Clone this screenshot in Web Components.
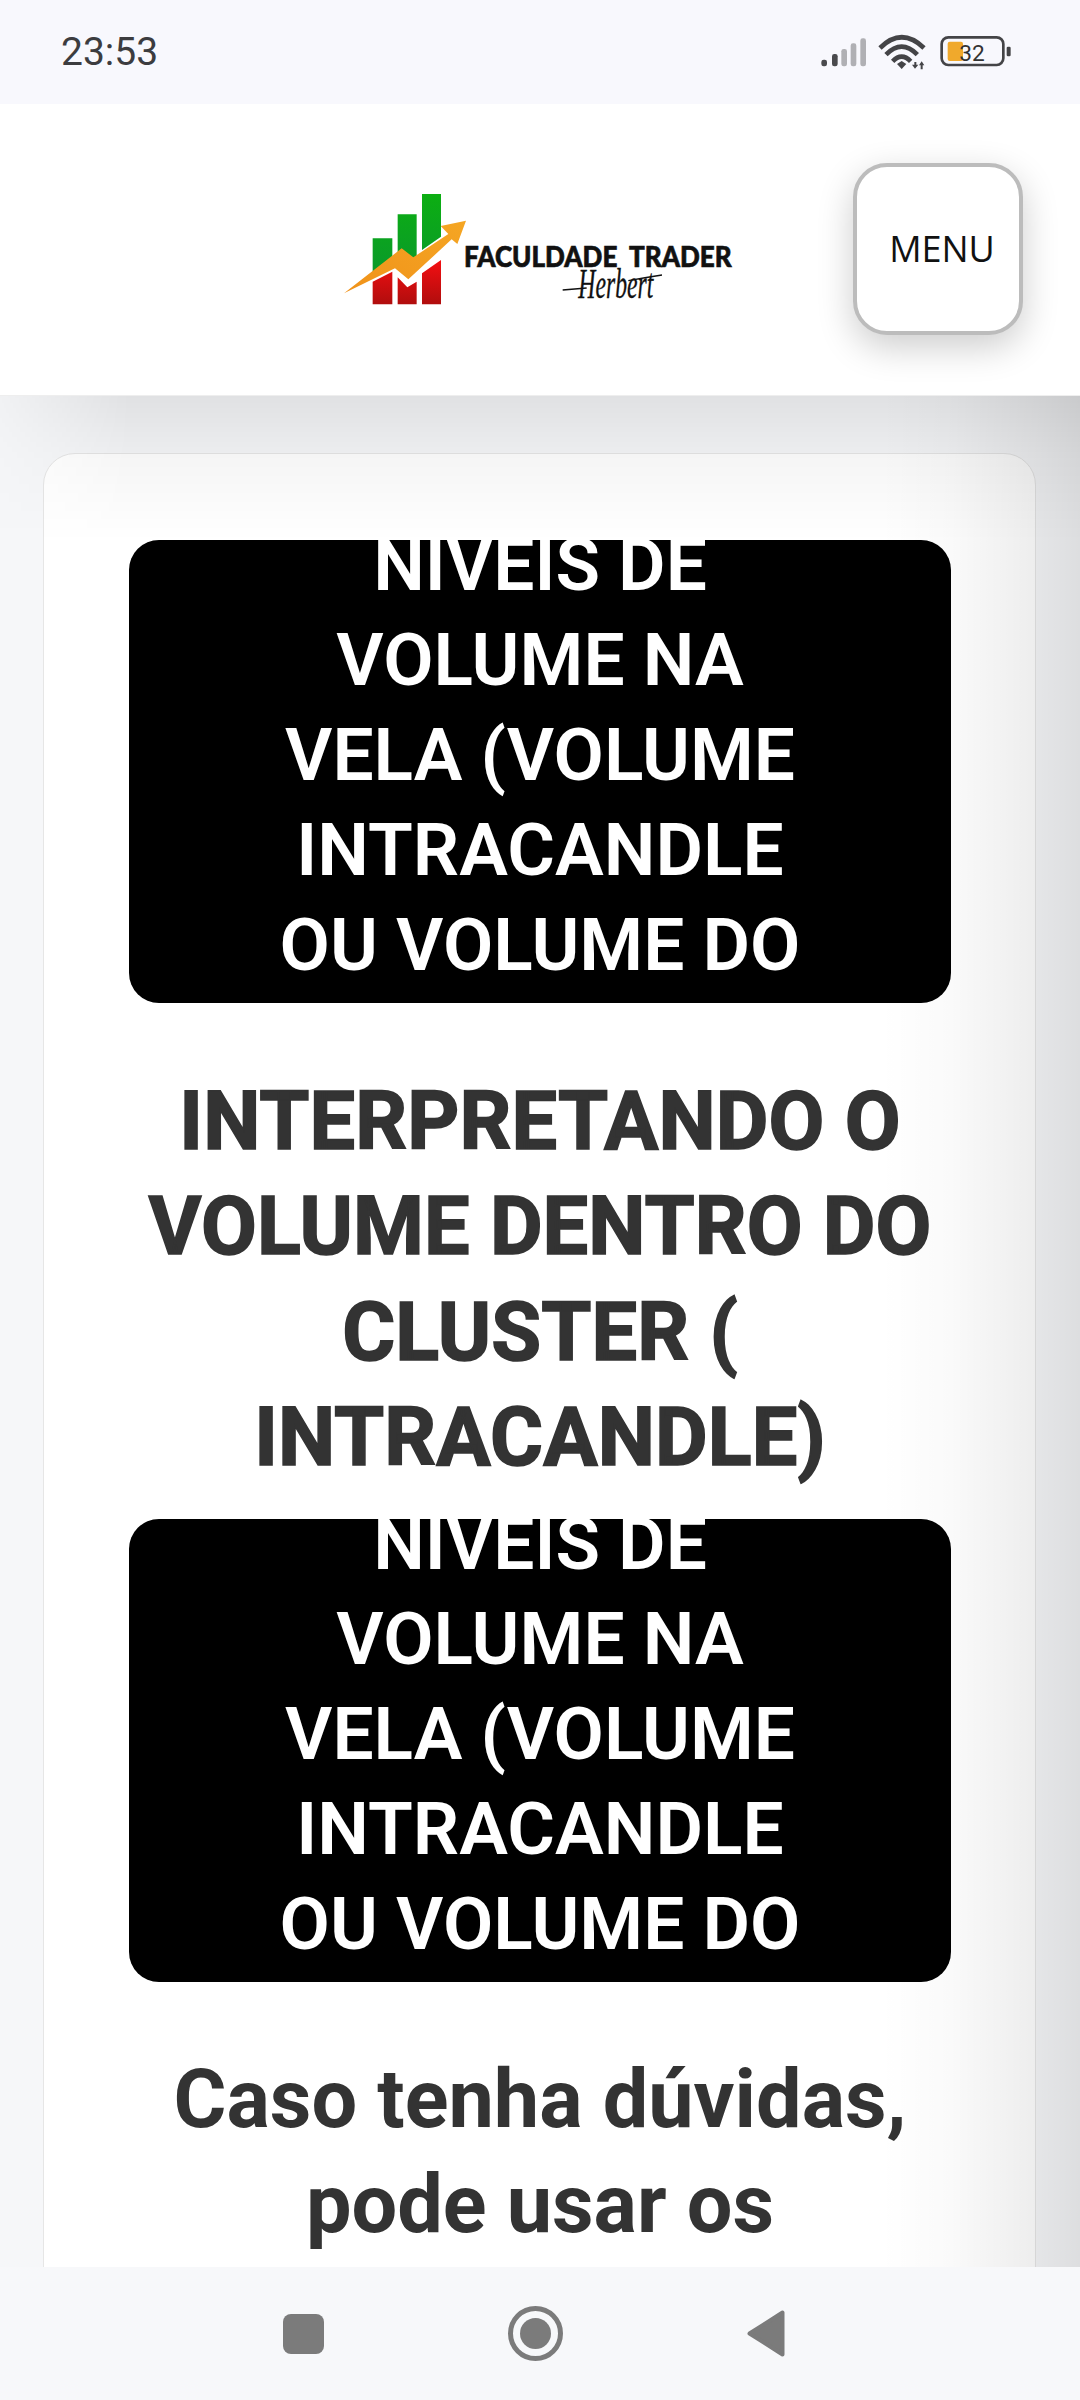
<!DOCTYPE html>
<html lang="pt-BR"><head><meta charset="utf-8"><title>Faculdade Trader</title>
<style>
html,body{margin:0;padding:0;height:2400px;overflow:hidden;background:#f5f6f8;font-family:Roboto,"Liberation Sans",sans-serif}
</style></head><body>
<app-frame>
  <status-bar slot="status" time="23:53"></status-bar>
  <site-header slot="header"></site-header>
  <lesson-card slot="main">
    <video-banner>NÍVEIS DE<br>VOLUME NA<br>VELA (VOLUME<br>INTRACANDLE<br>OU VOLUME DO</video-banner>
    <lesson-heading heavy style="margin-top:66px;margin-bottom:28.6px">INTERPRETANDO O<br>VOLUME DENTRO DO<br>CLUSTER (<br>INTRACANDLE)</lesson-heading>
    <video-banner>NÍVEIS DE<br>VOLUME NA<br>VELA (VOLUME<br>INTRACANDLE<br>OU VOLUME DO</video-banner>
    <lesson-heading style="margin-top:64.6px">Caso tenha dúvidas,<br>pode usar os</lesson-heading>
  </lesson-card>
  <nav-bar slot="nav"></nav-bar>
</app-frame>
<script>
function def(name, html, init){
  customElements.define(name, class extends HTMLElement{
    constructor(){super();this.attachShadow({mode:'open'}).innerHTML=typeof html==='function'?html(this):html;}
    connectedCallback(){if(init)init(this);}
  });
}
def('app-frame',`<style>
:host{display:flex;flex-direction:column;height:2400px;width:1080px;position:relative;overflow:hidden}
main{flex:1;min-height:0;overflow:hidden;position:relative;background:#f6f7f9;padding:57px 44px 0 43px}
.top{position:absolute;left:0;right:0;top:0;height:145px;pointer-events:none;
 background:linear-gradient(180deg,rgba(0,0,0,.085),rgba(0,0,0,.04) 40%,rgba(0,0,0,0));
 -webkit-mask-image:linear-gradient(90deg,rgba(0,0,0,.25),#000 130px);mask-image:linear-gradient(90deg,rgba(0,0,0,.25),#000 130px)}
.right{position:absolute;top:104px;bottom:133px;right:0;width:200px;pointer-events:none;
 background:linear-gradient(90deg,rgba(0,0,0,0),rgba(0,0,0,.02) 70px,rgba(0,0,0,.07) 156px,rgba(0,0,0,.1))}
</style>
<slot name="status"></slot><slot name="header"></slot>
<main><div class="top"></div><slot name="main"></slot></main>
<div class="right"></div>
<slot name="nav"></slot>`);

def('status-bar',h=>`<style>
:host{display:flex;flex:none;height:104px;background:#f8f8fd;align-items:center;justify-content:space-between;padding:0 40px 0 61px;box-sizing:border-box}
.t{font:400 39px/1 Roboto,sans-serif;color:#3c3c3f}
svg{display:block;margin-bottom:4px}
</style>
<span class="t">${h.getAttribute('time')}</span>
<svg width="260" height="60" viewBox="0 0 780 180">
<g fill="#4a4a4d">
<rect x="124" y="119" width="17" height="20" rx="7"/><rect x="156" y="102" width="17" height="37" rx="7"/></g>
<g fill="#b0b0b4"><rect x="184" y="87" width="17" height="52" rx="7"/><rect x="212" y="70" width="17" height="69" rx="7"/><rect x="241" y="55" width="17" height="84" rx="7"/></g>
<g fill="none" stroke="#444447" stroke-width="14">
<path d="M300 84Q365 20 432 84"/><path d="M318 104Q365 56 412 104"/><path d="M338 124Q365 96 392 124"/></g>
<path d="M351 132L365 123L379 132L365 147Z" fill="#444447"/>
<path d="M396 134h7v-8h6v8h6l-10 12z M417 136l8-12l8 12h-5v12h-6v-12z" fill="#444447"/>
<rect x="503" y="65" width="46" height="58" rx="6" fill="#f0a92c"/>
<rect x="485" y="52" width="185" height="83" rx="20" fill="none" stroke="#444447" stroke-width="8"/>
<rect x="680" y="80" width="12" height="29" rx="4" fill="#444447"/>
<text x="576" y="123" text-anchor="middle" font-family="Roboto,sans-serif" font-size="68" fill="#333">32</text>
</svg>`);

def('site-logo',`<style>:host{display:block;width:440px;height:150px}svg{display:block}</style>
<svg width="440" height="150" viewBox="0 0 1320 450">
<defs>
<linearGradient id="g" x1="0" y1="0" x2="0" y2="1"><stop offset="0" stop-color="#0cae12"/><stop offset="1" stop-color="#0a9a2a"/></linearGradient>
<linearGradient id="r" x1="0" y1="0" x2="0" y2="1"><stop offset="0" stop-color="#f40f12"/><stop offset="1" stop-color="#b00d0d"/></linearGradient>
<linearGradient id="o" x1="0" y1="1" x2="1" y2="0"><stop offset="0" stop-color="#f0921a"/><stop offset="1" stop-color="#f5a623"/></linearGradient>
</defs>
<path d="M158 205H217V270L158 305Z M233 133H290V270L262 285L233 262Z M306 72H363V200L306 240Z" fill="url(#g)"/>
<path d="M158 335L217 305V403H158Z M233 322L262 352L290 335V403H233Z M306 310L363 270V403H306Z" fill="url(#r)"/>
<path d="M72 370L245 235L280 262L385 192L362 168L438 152L412 222L395 208L265 328L225 295Z" fill="url(#o)"/>
<text x="432" y="290" xml:space="preserve" style="white-space:pre" textLength="803" lengthAdjust="spacingAndGlyphs" font-family="Lato,sans-serif" font-weight="900" font-size="86" fill="#111" stroke="#111" stroke-width="2">FACULDADE  TRADER</text>
<text x="775" y="385" textLength="225" lengthAdjust="spacingAndGlyphs" font-family="Liberation Serif,serif" font-style="italic" font-size="125" fill="#111" stroke="#111" stroke-width="1">Herbert</text>
<path d="M728 360L800 354M925 332Q980 322 1026 315" stroke="#111" stroke-width="4" fill="none"/>
</svg>`);

def('menu-button',`<style>
:host{display:flex;flex:none;box-sizing:border-box;width:170px;height:172px;border:4px solid #bcbcbc;border-radius:34px;background:#fff;align-items:center;justify-content:center;padding-left:8px;
font:400 36px/1 "Open Sans",sans-serif;color:#111;box-shadow:0 12px 36px rgba(0,0,0,.2)}
</style><slot></slot>`);

def('site-header',`<style>
:host{display:flex;flex:none;height:292px;box-sizing:border-box;background:#fff;align-items:center;padding:0 57px 0 320px;position:relative;z-index:1;border-bottom:1px solid #eee}
site-logo{margin-top:-9px}
menu-button{margin-left:93px;margin-top:-1px}
</style><site-logo></site-logo><menu-button>MENU</menu-button>`);

def('lesson-card',`<style>
:host{display:block;box-sizing:border-box;background:#fff;border:1px solid #e6e6e6;border-radius:32px;padding:86px 84px 0 85px;min-height:2000px}
</style><slot></slot>`);

def('video-banner',`<style>
:host{display:block;height:462.5px;background:#000;border-radius:30px;overflow:hidden;color:#fff;text-align:center}
div{margin-top:-22px;font:600 73px/95px Roboto,sans-serif}
</style><div><slot></slot></div>`);

def('lesson-heading',h=>`<style>
:host{display:block;text-align:center;color:#333;font:700 81px/105.6px Roboto,sans-serif;${h.hasAttribute('heavy')?'-webkit-text-stroke:1.6px #333;letter-spacing:.1px':''}}
</style><slot></slot>`);

def('nav-bar',`<style>
:host{display:flex;flex:none;height:133px;background:#f7f8fa;align-items:center;gap:184px;padding-left:283px;box-sizing:border-box;position:relative}
svg{display:block;flex:none}
</style>
<svg width="41" height="40" viewBox="0 0 41 40"><rect width="41" height="40" rx="8" fill="#7b7b7b"/></svg>
<svg width="55" height="55" viewBox="0 0 55 55"><circle cx="27.5" cy="27.5" r="25" fill="none" stroke="#7b7b7b" stroke-width="5"/><circle cx="27.5" cy="27.5" r="15.5" fill="#7b7b7b"/></svg>
<svg width="38" height="47" viewBox="0 0 38 47"><path d="M35.500 2.500V44.500L2.500 23.500Z" fill="#7b7b7b" stroke="#7b7b7b" stroke-width="4" stroke-linejoin="round"/></svg>`);
</script>
</body></html>
